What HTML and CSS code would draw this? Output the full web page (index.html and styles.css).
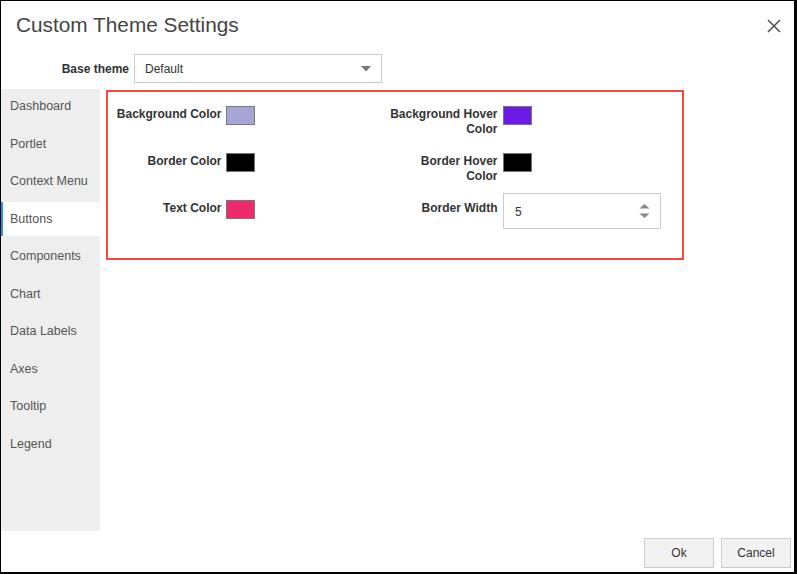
FILE: index.html
```html
<!DOCTYPE html>
<html>
<head>
<meta charset="utf-8">
<link rel="stylesheet" href="styles.css">
</head>
<body>
<div class="dialog">
  <div class="header">
    <span class="title">Custom Theme Settings</span>
    <svg class="close" width="14" height="14" viewBox="0 0 14 14"><path d="M1 1 L13 13 M13 1 L1 13" stroke="#555" stroke-width="1.6" fill="none"/></svg>
  </div>
  <div class="base-row">
    <span class="base-label">Base theme</span>
    <div class="select">
      <span>Default</span>
      <svg class="caret" width="10" height="6" viewBox="0 0 10 6"><path d="M0 0 L10 0 L5 5.5 Z" fill="#777"/></svg>
    </div>
  </div>
  <div class="body">
    <ul class="sidebar">
      <li class="item">Dashboard</li>
      <li class="item">Portlet</li>
      <li class="item">Context Menu</li>
      <li class="item active">Buttons</li>
      <li class="item">Components</li>
      <li class="item">Chart</li>
      <li class="item">Data Labels</li>
      <li class="item">Axes</li>
      <li class="item">Tooltip</li>
      <li class="item">Legend</li>
    </ul>
    <div class="content">
      <div class="panel">
        <div class="field"><span class="label">Background Color</span><span class="swatch sw-bg"></span></div>
        <div class="field"><span class="label">Background Hover Color</span><span class="swatch sw-hover"></span></div>
        <div class="field"><span class="label">Border Color</span><span class="swatch sw-black"></span></div>
        <div class="field"><span class="label">Border Hover Color</span><span class="swatch sw-black"></span></div>
        <div class="field"><span class="label">Text Color</span><span class="swatch sw-text"></span></div>
        <div class="field"><span class="label">Border Width</span>
          <div class="number">
            <span>5</span>
            <svg class="spin" width="11" height="14" viewBox="0 0 11 14"><path d="M5.5 0 L10.5 4.5 L0.5 4.5 Z M0.5 9.5 L10.5 9.5 L5.5 14 Z" fill="#888"/></svg>
          </div>
        </div>
      </div>
    </div>
  </div>
  <div class="footer">
    <button class="btn">Ok</button>
    <button class="btn">Cancel</button>
  </div>
</div>
</body>
</html>
```
FILE: styles.css
```css
html, body {
  margin: 0;
  padding: 0;
  background: #000;
}
body {
  font-family: "Liberation Sans", Arial, sans-serif;
  padding: 1px 3px 2px 1px;
  width: 797px;
  height: 574px;
  box-sizing: border-box;
}
.dialog {
  background: #fff;
  height: 571px;
  display: flex;
  flex-direction: column;
}
.header {
  display: flex;
  align-items: center;
  justify-content: space-between;
  padding: 12px 0 0 15px;
  height: 24px;
}
.title {
  font-size: 20.8px;
  line-height: 24px;
  color: #444;
}
.close {
  margin-right: 13px;
  margin-top: 1px;
}
.base-row {
  display: flex;
  align-items: center;
  margin-top: 17px;
  height: 29px;
}
.base-label {
  width: 128px;
  text-align: right;
  font-size: 12px;
  font-weight: bold;
  color: #333;
  margin-right: 5px;
}
.select {
  height: 27px;
  border: 1px solid #ccc;
  display: flex;
  align-items: center;
  justify-content: space-between;
  font-size: 12px;
  color: #333;
  padding: 0 10px 0 10px;
  box-sizing: content-box;
  width: 226px;
}
.caret {
  margin-top: 1px;
}
.body {
  display: flex;
  margin-top: 6px;
  flex: 1;
}
.sidebar {
  list-style: none;
  margin: 0;
  padding: 0;
  width: 99px;
  background: #eee;
}
.item {
  height: 34px;
  line-height: 34px;
  margin-bottom: 3.55px;
  padding-left: 9px;
  font-size: 12.5px;
  color: #555;
}
.active {
  background: #fff;
  border-left: 2px solid #1a9be0;
  padding-left: 7px;
}
.content {
  flex: 1;
  padding: 1px 0 0 6px;
}
.panel {
  border: 2px solid #f44;
  display: grid;
  grid-template-columns: 276px 1fr;
  grid-auto-rows: 47px;
  padding: 14px 0 0 3.5px;
  box-sizing: border-box;
  width: 578px;
  height: 170px;
}
.field {
  display: flex;
  align-items: flex-start;
}
.label {
  width: 110px;
  text-align: right;
  font-size: 12px;
  line-height: 15px;
  padding-top: 1px;
  font-weight: bold;
  color: #333;
  margin-right: 4px;
}
.field:nth-child(2n) .label {
  margin-right: 5.5px;
}
.swatch {
  width: 27px;
  height: 17px;
  border: 1px solid #777;
}
.sw-bg { background: #a5a5d6; }
.sw-hover { background: #6c1ae6; }
.sw-black { background: #000; }
.sw-text { background: #ef2a6b; }
.number {
  margin-top: -7px;
  border: 1px solid #ccc;
  display: flex;
  align-items: center;
  justify-content: space-between;
  padding: 0 10px 0 11px;
  box-sizing: border-box;
  width: 158px;
  height: 36px;
  font-size: 12px;
  color: #333;
}
.number span {
  margin-top: 2px;
}
.spin {
  margin-top: -1px;
}
.footer {
  display: flex;
  justify-content: flex-end;
  gap: 7px;
  padding: 7px 3px 0 0;
  height: 41px;
  box-sizing: border-box;
}
.btn {
  width: 70px;
  height: 30px;
  background: #f2f2f2;
  border: 1px solid #ccc;
  font-family: "Liberation Sans", Arial, sans-serif;
  font-size: 12px;
  color: #333;
  padding: 0;
  margin: 0;
}
```
